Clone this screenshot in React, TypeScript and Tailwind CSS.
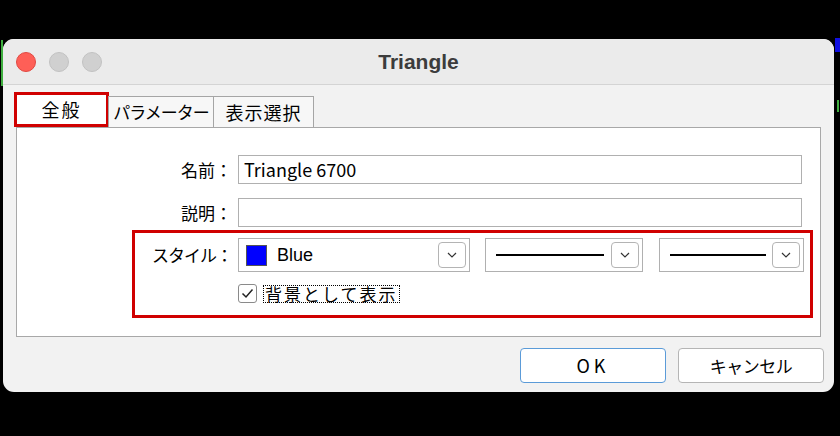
import React from "react";

const jp = { fontFamily: '"Noto Sans CJK JP", "Noto Sans", sans-serif' };

function Chevron() {
  return (
    <svg width="10" height="6" viewBox="0 0 10 6" fill="none">
      <polyline points="1,1 5,5 9,1" stroke="#333" strokeWidth="1.2" />
    </svg>
  );
}

function DropBtn() {
  return (
    <div className="w-[28px] h-[26px] rounded-[4px] border border-[#b4b4b4] bg-white flex items-center justify-center shrink-0">
      <Chevron />
    </div>
  );
}

export default function App() {
  return (
    <div className="w-[840px] h-[436px] bg-black relative overflow-hidden pt-[39px] pl-[3px]" style={jp}>
      <div className="absolute left-[1px] top-[40px] w-[2px] h-[46px] bg-[#3fae3f]" />
      <div className="absolute right-0 top-[38px] w-[5px] h-[14px] bg-[#1010e0]" />
      <div className="absolute right-[1px] top-[100px] w-[2px] h-[12px] bg-[#3fae3f]" />
      <div className="w-[831px] h-[353px] rounded-[11px] bg-[#f2f2f2] flex flex-col overflow-hidden">
        {/* title bar */}
        <div className="h-[46px] shrink-0 bg-[#ebebeb] border-b border-[#d4d4d4] relative flex items-center pl-[13px] gap-[13px]">
          <div className="w-[20px] h-[20px] rounded-full bg-[#fe5f57] border border-[#e14942]" />
          <div className="w-[20px] h-[20px] rounded-full bg-[#d0d0d0] border border-[#c2c2c2]" />
          <div className="w-[20px] h-[20px] rounded-full bg-[#d0d0d0] border border-[#c2c2c2]" />
          <div
            className="absolute inset-0 flex items-center justify-center text-[21px] font-bold text-[#3c3c3c] pointer-events-none"
            style={{ fontFamily: '"Liberation Sans", Arial, sans-serif' }}
          >
            Triangle
          </div>
        </div>

        {/* tabs */}
        <div className="h-[42px] shrink-0 flex items-end pl-[11px]">
          <div className="h-[35px] w-[95px] border-[3px] border-[#d00000] bg-white flex items-center justify-center text-[18px] text-black tracking-[2px]">
            全般
          </div>
          <div className="h-[31px] w-[106px] -ml-[1px] border border-b-0 border-[#a5a5a5] bg-[#f7f7f7] flex items-center justify-center text-[17px] text-black tracking-[-1px]">
            パラメーター
          </div>
          <div className="h-[31px] w-[101px] -ml-[1px] border border-b-0 border-[#a5a5a5] bg-[#f7f7f7] flex items-center justify-center text-[18px] text-black tracking-[1px]">
            表示選択
          </div>
        </div>

        {/* panel */}
        <div className="mx-[13px] h-[210px] shrink-0 bg-white border border-[#a8a8a8] flex flex-col pt-[27px]">
          <div className="flex items-center">
            <div className="w-[221px] text-right pr-[6px] text-[17px] text-black">名前：</div>
            <div className="w-[564px] h-[29px] border border-[#b0b0b0] flex items-center pl-[5px] text-[18px] text-black">
              Triangle 6700
            </div>
          </div>
          <div className="flex items-center mt-[14px]">
            <div className="w-[221px] text-right pr-[6px] text-[17px] text-black">説明：</div>
            <div className="w-[564px] h-[29px] border border-[#b0b0b0]" />
          </div>

          <div className="ml-[115px] mt-[3px] w-[681px] h-[88px] border-[3px] border-[#d00000] flex flex-col pt-[5px]">
            <div className="flex items-center">
              <div className="w-[103px] text-right pr-[6px] text-[17px] text-black tracking-[-1px]">スタイル：</div>
              <div className="w-[232px] h-[34px] border border-[#b0b0b0] flex items-center pl-[7px] pr-[3px]">
                <div className="w-[21px] h-[21px] bg-[#0000ff] border border-[#555]" />
                <span className="ml-[10px] text-[18px] text-black flex-1" style={{ fontFamily: '"Liberation Sans", Arial, sans-serif' }}>
                  Blue
                </span>
                <DropBtn />
              </div>
              <div className="ml-[15px] w-[158px] h-[34px] border border-[#b0b0b0] flex items-center pl-[10px] pr-[3px]">
                <div className="w-[108px] h-[1.5px] bg-black" />
                <div className="flex-1" />
                <DropBtn />
              </div>
              <div className="ml-[16px] w-[145px] h-[34px] border border-[#b0b0b0] flex items-center pl-[10px] pr-[3px]">
                <div className="w-[96px] h-[1.5px] bg-black" />
                <div className="flex-1" />
                <DropBtn />
              </div>
            </div>
            <div className="flex items-center mt-[12px] ml-[103px]">
              <div className="w-[19px] h-[19px] rounded-[3px] border border-[#8a8a8a] bg-white flex items-center justify-center">
                <svg width="13" height="11" viewBox="0 0 13 11" fill="none">
                  <polyline points="1.5,5.5 5,9 11.5,1.5" stroke="#222" strokeWidth="1.5" />
                </svg>
              </div>
              <div className="ml-[6px] h-[18px] px-[1px] border border-dotted border-black flex items-center text-[17px] leading-none text-black tracking-[2px]">
                背景として表示
              </div>
            </div>
          </div>
        </div>

        {/* buttons */}
        <div className="flex justify-end gap-[12px] pr-[10px] mt-[11px]">
          <div className="w-[146px] h-[35px] rounded-[4px] border-[1.5px] border-[#5b9bd8] bg-white flex items-center justify-center text-[18px] text-black tracking-[4px]">
            OK
          </div>
          <div className="w-[146px] h-[35px] rounded-[4px] border border-[#b5b5b5] bg-white flex items-center justify-center text-[17px] text-black tracking-[-0.5px]">
            キャンセル
          </div>
        </div>
      </div>
    </div>
  );
}
